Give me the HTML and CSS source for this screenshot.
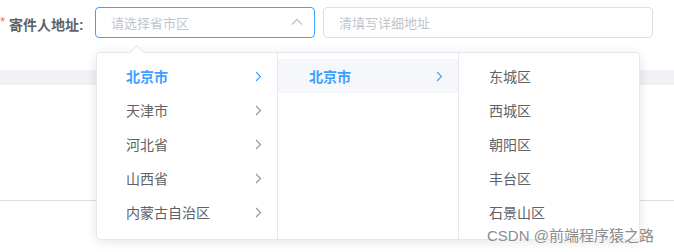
FILE: index.html
```html
<!DOCTYPE html>
<html lang="zh">
<head>
<meta charset="utf-8">
<link rel="stylesheet" href="styles.css">
</head>
<body>
<div class="page">
  <div class="form-row">
    <label class="label"><span class="req">*</span>寄件人地址:</label>
    <div class="input is-focus">
      <span class="ph">请选择省市区</span>
      <svg class="up" width="12" height="8" viewBox="0 0 12 8"><path d="M1 6.5 L6 1.5 L11 6.5" fill="none" stroke="#c0c4cc" stroke-width="1.3"/></svg>
    </div>
    <div class="input wide"><span class="ph">清填写详细地址</span></div>
  </div>
  <div class="band"></div>
  <div class="rule"></div>

  <div class="popper">
    <div class="notch"></div>
    <div class="menu">
      <div class="item active">北京市<svg class="chev" width="7" height="11" viewBox="0 0 7 11"><path d="M1 1 L5.5 5.5 L1 10" fill="none" stroke="currentColor" stroke-width="1.1"/></svg></div>
      <div class="item">天津市<svg class="chev" width="7" height="11" viewBox="0 0 7 11"><path d="M1 1 L5.5 5.5 L1 10" fill="none" stroke="currentColor" stroke-width="1.1"/></svg></div>
      <div class="item">河北省<svg class="chev" width="7" height="11" viewBox="0 0 7 11"><path d="M1 1 L5.5 5.5 L1 10" fill="none" stroke="currentColor" stroke-width="1.1"/></svg></div>
      <div class="item">山西省<svg class="chev" width="7" height="11" viewBox="0 0 7 11"><path d="M1 1 L5.5 5.5 L1 10" fill="none" stroke="currentColor" stroke-width="1.1"/></svg></div>
      <div class="item">内蒙古自治区<svg class="chev" width="7" height="11" viewBox="0 0 7 11"><path d="M1 1 L5.5 5.5 L1 10" fill="none" stroke="currentColor" stroke-width="1.1"/></svg></div>
    </div>
    <div class="menu">
      <div class="item active hover">北京市<svg class="chev" width="7" height="11" viewBox="0 0 7 11"><path d="M1 1 L5.5 5.5 L1 10" fill="none" stroke="currentColor" stroke-width="1.1"/></svg></div>
    </div>
    <div class="menu last">
      <div class="item">东城区</div>
      <div class="item">西城区</div>
      <div class="item">朝阳区</div>
      <div class="item">丰台区</div>
      <div class="item">石景山区</div>
    </div>
  </div>

  <div class="watermark">CSDN @前端程序猿之路</div>
</div>
</body>
</html>
```

FILE: styles.css
```css
* { box-sizing: border-box; }
html, body {
  margin: 0;
  padding: 0;
  background: #fff;
  font-family: "Liberation Sans", "Noto Sans CJK SC", sans-serif;
}
.page {
  position: relative;
  width: 674px;
  height: 252px;
  overflow: hidden;
}
.form-row {
  display: flex;
  align-items: center;
  padding-top: 7px;
  height: 38px;
}
.label {
  width: 95px;
  font-size: 14px;
  font-weight: bold;
  color: #606266;
  display: flex;
  align-items: center;
  padding-top: 2px;
}
.req {
  color: #f56c6c;
  font-weight: normal;
  margin-right: 4px;
  font-size: 13px;
  position: relative;
  top: -2px;
}
.input {
  height: 31px;
  width: 220px;
  border: 1px solid #dcdfe6;
  border-radius: 4px;
  display: flex;
  align-items: center;
  justify-content: space-between;
  padding: 0 11px 0 15px;
}
.input.is-focus { border-color: #409eff; }
.input.wide {
  width: 330px;
  margin-left: 8px;
}
.ph {
  font-size: 13px;
  color: #c0c4cc;
}
.up { margin-top: -1px; }
.band {
  margin-top: 32px;
  height: 15px;
  background: #f0f1f5;
}
.rule {
  margin-top: 115px;
  height: 1px;
  background: #dcdcdc;
}
.popper {
  position: absolute;
  left: 96px;
  top: 52px;
  display: flex;
  height: 188px;
  background: #fff;
  border: 1px solid #e4e7ed;
  border-radius: 4px;
  box-shadow: 0 2px 12px 0 rgba(0, 0, 0, 0.1);
}
.notch {
  position: absolute;
  left: 35px;
  top: -6px;
  width: 10px;
  height: 10px;
  background: #fff;
  border-left: 1px solid #e4e7ed;
  border-top: 1px solid #e4e7ed;
  transform: rotate(45deg);
}
.menu {
  width: 181px;
  padding: 6px 0;
  border-right: 1px solid #e4e7ed;
  position: relative;
}
.menu.last {
  width: 180px;
  border-right: none;
}
.item {
  height: 34px;
  display: flex;
  align-items: center;
  justify-content: space-between;
  padding: 0 15px 0 29px;
  font-size: 14px;
  color: #606266;
}
.menu.last .item { padding-left: 30px; }
.item .chev { color: #909399; }
.item.active {
  color: #409eff;
  font-weight: bold;
}
.item.active .chev { color: #409eff; }
.item.hover {
  background: #f5f7fa;
  padding-left: 31px;
}
.watermark {
  position: absolute;
  left: 487px;
  top: 224px;
  font-size: 15px;
  color: #8c8c8c;
  white-space: nowrap;
  text-shadow: 0 0 2px #fff;
}
```
